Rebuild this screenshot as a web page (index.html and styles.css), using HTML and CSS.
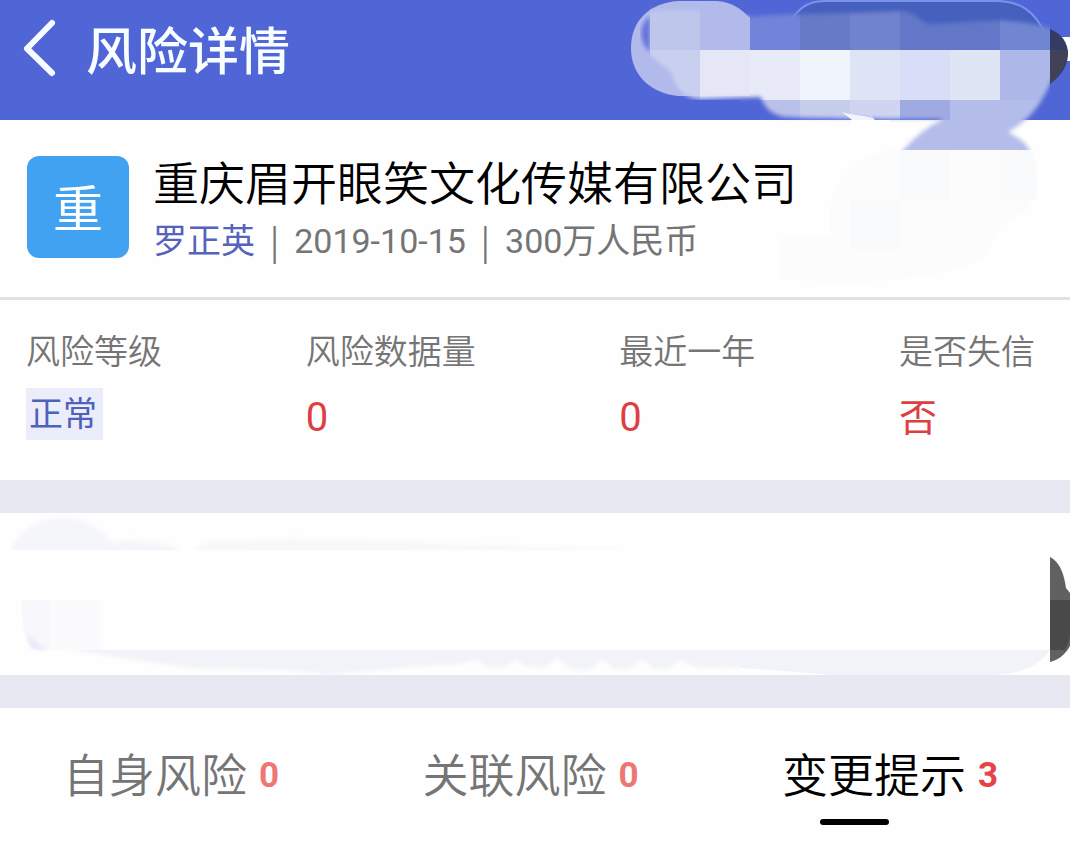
FILE: index.html
```html
<!DOCTYPE html>
<html lang="zh-CN">
<head>
<meta charset="utf-8">
<meta name="viewport" content="width=device-width, initial-scale=1">
<title>风险详情</title>
<link rel="stylesheet" href="styles.css">
</head>
<body>
<header class="topbar">
  <button class="back" type="button" aria-label="返回">
    <svg width="36" height="60" viewBox="0 0 36 60" fill="none" stroke="#f5fcff" stroke-width="6" stroke-linecap="round" stroke-linejoin="round"><path d="M30 5 5 30.500 30 55"/></svg>
  </button>
  <h1 class="title">风险详情</h1>
  <svg class="mosaic" width="450" height="300" viewBox="620 0 450 300" aria-hidden="true">
    <defs>
      <filter id="soft" x="-10%" y="-10%" width="120%" height="120%"><feGaussianBlur stdDeviation="2"/></filter>
      <mask id="smear" maskUnits="userSpaceOnUse" x="620" y="0" width="450" height="150">
        <path filter="url(#soft)" fill="#fff" d="M646 12C665 8 720 10 748 17C790 13 850 14 900 11C918 12 921 24 932 24L1000 20C1022 22 1044 24 1060 32V60C1043 105 1032 118 1008 132C1018 138 1028 142 1032 156H898C914 138 924 128 944 119C900 119 830 119 784 117C765 112 765 104 760 97L700 99C681 98 675 84 671 72L646 52Z"/>
      </mask>
    </defs>
    <path fill="#4560bd" stroke="#7b92ef" stroke-width="2" d="M786 28C797 9 807 1 824 1H996C1020 1 1035 11 1045 34V60H786Z"/>
    <path fill="#b2baeb" d="M678 1H716C732 2 740 8 750 18V96H678C650 93 631 75 631 48C631 20 650 3 678 1Z"/>
    <path fill="#6375d8" filter="url(#soft)" d="M650 16C638 25 639 43 650 52Z"/>
    <path fill="#fff" d="M1058 37H1070V61H1058Z"/>
    <path fill="#343c64" d="M1050 29C1073 38 1075 66 1050 84Z"/>
    <path fill="#414157" d="M1050 50H1068C1067 64 1059 76 1050 84Z"/>
    <g mask="url(#smear)" shape-rendering="crispEdges">
      <path fill="#bec6ec" d="M650 0h50v50h-50z"/><path fill="#b1baeb" d="M700 0h50v50h-50z"/>
      <path fill="#7184da" d="M750 0h50v50h-50z"/><path fill="#667ac8" d="M800 0h50v50h-50z"/>
      <path fill="#7083ce" d="M850 0h50v50h-50z"/><path fill="#6277c7" d="M900 0h100v50h-100z"/>
      <path fill="#7186d3" d="M1000 0h50v50h-50z"/>
      <path fill="#c9d0ef" d="M650 50h50v50h-50z"/><path fill="#e5e6f6" d="M700 50h50v50h-50z"/>
      <path fill="#e8eaf7" d="M750 50h50v50h-50z"/><path fill="#f0f4fd" d="M800 50h50v50h-50z"/>
      <path fill="#dee3f6" d="M850 50h50v50h-50z"/><path fill="#d9def8" d="M900 50h50v50h-50z"/>
      <path fill="#dfe5f5" d="M950 50h50v50h-50z"/><path fill="#adb8e8" d="M1000 50h50v50h-50z"/>
      <path fill="#b9c1eb" d="M740 100h60v50h-60z"/><path fill="#c7cdec" d="M800 100h50v50h-50z"/>
      <path fill="#d0d4f1" d="M850 100h50v20h-50z"/><path fill="#a0aae2" d="M900 100h50v20h-50z"/>
      <path fill="#b4bce9" d="M950 100h100v50H890v-30h60z"/>
    </g>
    <path fill="#f4f5fc" d="M842 112 852 120H875L867 112 872 118C863 115 855 116 842 112Z"/>
    <path fill="#fcfcfd" d="M890 150H1030Q1040 160 1037 190C1030 220 990 222 990 250C980 270 900 282 850 282Q790 282 780 276V236H830V210Q838 160 890 150Z"/>
    <path fill="#f9fafc" d="M900 150h50v50h-50zM1000 150h30q9 20 6 50h-36zM850 200h50v50h-50z"/>
  </svg>
</header>
<main>
  <section class="company">
    <div class="logo" aria-hidden="true">重</div>
    <div class="info">
      <h2 class="name">重庆眉开眼笑文化传媒有限公司</h2>
      <p class="meta"><a class="person" href="#person">罗正英</a><span class="bar">|</span><span>2019-10-15</span><span class="bar">|</span><span>300万人民币</span></p>
    </div>
  </section>
  <dl class="stats">
    <div><dt>风险等级</dt><dd><span class="tag">正常</span></dd></div>
    <div><dt>风险数据量</dt><dd>0</dd></div>
    <div><dt>最近一年</dt><dd>0</dd></div>
    <div><dt>是否失信</dt><dd class="word">否</dd></div>
  </dl>
  <section class="panel" aria-hidden="true">
    <svg class="haze haze-left" width="740" height="162" viewBox="0 513 740 162">
      <defs>
        <filter id="fog" x="-10%" y="-30%" width="120%" height="160%"><feGaussianBlur stdDeviation="2"/></filter>
        <clipPath id="upper"><path d="M0 513H640V550H0Z"/></clipPath>
        <clipPath id="lower"><path d="M0 650H740V675H0Z"/></clipPath>
      </defs>
      <g clip-path="url(#upper)">
        <path filter="url(#fog)" fill="#f5f6fa" d="M10 554C18 530 38 518 62 518C88 518 102 532 112 542C140 538 172 542 184 554Z"/>
        <path filter="url(#fog)" fill="#f8f8fb" d="M192 554C204 534 225 545 250 541C280 534 420 543 620 550V556Z"/>
      </g>
      <path fill="#f7f7fc" d="M22 600H49V650H36C25 646 21 625 22 600Z"/>
      <path fill="#e9e7f9" filter="url(#fog)" d="M28 634Q36 645 48 649H34Q27 645 28 634Z"/>
      <path fill="#fbfbfe" d="M49 600H100V650H49Z"/>
      <g clip-path="url(#lower)"><path filter="url(#fog)" fill="#f2f3f8" d="M50 646C90 652 130 660 165 664C210 674 280 664 325 675C370 672 410 665 455 665L476 660 490 668 502 668 516 660 528 667H545L557 658 572 670H590L602 659 614 669H630L642 659 654 669H668L680 660 694 667 750 668V646Z"/></g>
    </svg>
    <svg class="haze haze-right" width="330" height="162" viewBox="740 513 330 162">
      <path fill="#f2f3f8" d="M740 650H1050C1040 665 1020 675 990 675H830Q780 670 740 668Z"/>
      <path fill="#616161" d="M1050 557C1062 563 1065 580 1066 588L1070 593V646C1065 655 1058 660 1050 662Z"/>
      <path fill="#494949" d="M1050 600H1070V635Q1069 643 1065 650H1050Z"/>
    </svg>
  </section>
  <nav class="tabs">
    <a class="tab" href="#self">自身风险<b class="count">0</b></a>
    <a class="tab" href="#related">关联风险<b class="count">0</b></a>
    <a class="tab active" href="#changes" aria-current="page">变更提示<b class="count">3</b></a>
  </nav>
</main>
</body>
</html>
```
FILE: styles.css
```css
* { box-sizing: border-box; }

body {
  margin: 0;
  background: #fefefe;
  color: #757575;
  font-family: Roboto, "Noto Sans CJK SC", sans-serif;
  font-size: 34px;
}

h1, h2, p, dl, dd { margin: 0; font-weight: 400; }
a { color: inherit; text-decoration: none; }

.topbar {
  position: relative;
  display: flex;
  align-items: flex-start;
  gap: 28px;
  height: 120px;
  padding: 18px 20px 0;
  background: #5066d6;
}

.back {
  display: flex;
  padding: 0;
  border: 0;
  background: none;
}
.back svg { margin-left: 2px; }

.title {
  color: #f8fdff;
  font-size: 51px;
  font-weight: 500;
  line-height: 70px;
}

.mosaic {
  position: absolute;
  top: 0;
  right: 0;
  pointer-events: none;
}

.company {
  display: flex;
  gap: 24px;
  padding: 36px 26px 27px 27px;
  border-bottom: 3px solid #e2e2e2;
}

.logo {
  flex: none;
  display: grid;
  place-items: center;
  width: 102px;
  height: 102px;
  padding-bottom: 4px;
  border-radius: 12px;
  background: #42a2f2;
  color: #fff;
  font-size: 50px;
}

.name {
  color: #000;
  font-size: 46px;
  font-weight: 350;
  line-height: 56px;
}

.meta {
  display: flex;
  line-height: 58px;
}
.person { color: #5563bd; }
.bar {
  padding: 0 15px;
  font-family: "Noto Sans CJK SC", sans-serif;
}

.stats {
  display: flex;
  justify-content: space-between;
  padding: 28px 35px 36px 26px;
}
.stats dt {
  font-weight: 350;
  line-height: 48px;
}
.stats dd {
  color: #dd3e43;
  font-size: 40px;
  line-height: 52px;
  margin-top: 16px;
}
.stats .word { font-size: 38px; }
.tag {
  display: block;
  width: max-content;
  margin-top: -4px;
  padding: 0 6px 0 3px;
  background: #ecedfa;
  color: #4f61ba;
  font-size: 34px;
}

.panel {
  position: relative;
  height: 228px;
  border: solid #e7e8f1;
  border-width: 33px 0;
}
.haze { position: absolute; top: 0; }
.haze-left { left: 0; }
.haze-right { right: 0; }

.tabs {
  display: flex;
  justify-content: space-between;
  padding: 32px 72px 31px 63px;
}
.tab {
  position: relative;
  display: flex;
  align-items: center;
  gap: 12px;
  padding-bottom: 13px;
  font-size: 46px;
  font-weight: 350;
  line-height: 72px;
}
.count {
  color: #ee7776;
  font-size: 35px;
  font-weight: 700;
}
.active { color: #000; }
.active .count { color: #e54345; }
.active::after {
  content: "";
  position: absolute;
  bottom: 0;
  left: 38px;
  width: 69px;
  height: 6px;
  border-radius: 3px;
  background: #000;
}
```
